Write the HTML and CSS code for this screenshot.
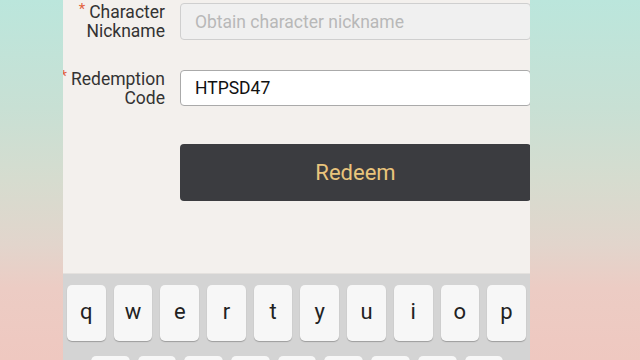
FILE: index.html
```html
<!DOCTYPE html>
<html lang="en">
<head>
    <meta charset="UTF-8">
    <meta name="viewport" content="width=device-width, initial-scale=1.0">
    <title>Redeem Code</title>
    <link rel="stylesheet" href="styles.css">
</head>
<body>
    <div class="side"></div>

    <div class="phone">
        <div class="form">
            <div class="row">
                <label class="label">
                    <span class="line"><span class="req">*</span>Character</span>
                    <span class="line">Nickname</span>
                </label>
                <input class="field field-disabled" type="text" placeholder="Obtain character nickname" disabled>
            </div>
            <div class="row row-code">
                <label class="label">
                    <span class="line"><span class="req">*</span>Redemption</span>
                    <span class="line">Code</span>
                </label>
                <input class="field" type="text" value="HTPSD47">
            </div>
            <div class="row row-btn">
                <span></span>
                <button class="btn-redeem">Redeem</button>
            </div>
        </div>

        <div class="keyboard">
            <div class="key-row">
                <div class="key">q</div>
                <div class="key">w</div>
                <div class="key">e</div>
                <div class="key">r</div>
                <div class="key">t</div>
                <div class="key">y</div>
                <div class="key">u</div>
                <div class="key">i</div>
                <div class="key">o</div>
                <div class="key">p</div>
            </div>
            <div class="key-row key-row-2">
                <div class="key">a</div>
                <div class="key">s</div>
                <div class="key">d</div>
                <div class="key">f</div>
                <div class="key">g</div>
                <div class="key">h</div>
                <div class="key">j</div>
                <div class="key">k</div>
                <div class="key">l</div>
            </div>
        </div>
    </div>

    <div class="side"></div>
</body>
</html>
```

FILE: styles.css
```css
* {
    margin: 0;
    padding: 0;
    box-sizing: border-box;
}

html, body {
    height: 100%;
    overflow: hidden;
}

body {
    font-family: Roboto, 'Noto Sans', sans-serif;
    background: linear-gradient(180deg, #bbe6dc 0%, #c8e0d4 30%, #d6dccf 50%, #e2d5cc 68%, #ecccc4 80%, #efc8c0 100%);
    display: flex;
    width: 640px;
    height: 360px;
}

.side {
    width: 63px;
    flex: none;
}

.side:last-child {
    width: 110px;
}

.phone {
    width: 467px;
    flex: none;
    background: #f3f0ed;
    display: flex;
    flex-direction: column;
    overflow: hidden;
}

.form {
    flex: none;
    padding-top: 3px;
    height: 274px;
    border-bottom: 1px solid #e4e1de;
}

.row {
    display: grid;
    grid-template-columns: 117px 1fr;
    align-items: start;
}

.row-code {
    margin-top: 30px;
}

.row-btn {
    margin-top: 37px;
}

.label {
    height: 37px;
    display: flex;
    flex-direction: column;
    align-items: flex-end;
    padding-right: 15px;
    font-size: 17.5px;
    line-height: 18.5px;
    color: #333;
}

.line {
    white-space: nowrap;
}

.req {
    display: inline-block;
    color: #e2623e;
    font-size: 15px;
    line-height: 10px;
    margin-right: 4px;
    vertical-align: 4px;
}

.field {
    width: 351px;
    height: 37px;
    border: 1px solid #aaa;
    border-radius: 4px;
    background: #fff;
    font-family: Roboto, 'Noto Sans', sans-serif;
    font-size: 17.5px;
    color: #111;
    padding: 0 14px;
    outline: none;
}

.row-code .field {
    height: 36px;
}

.field-disabled {
    background: #f0f0f0;
    border-color: #cfcfcf;
}

.field::placeholder {
    color: #b8b8b8;
    font-size: 17.5px;
}

.btn-redeem {
    width: 351px;
    height: 57px;
    border: none;
    border-radius: 4px;
    background: #3b3c40;
    color: #e9c47c;
    font-family: Roboto, 'Noto Sans', sans-serif;
    font-size: 22px;
}

.keyboard {
    flex: 1;
    background: #d4d4d4;
    padding: 11px 4px 0 4px;
}

.key-row {
    display: flex;
    gap: 8px;
    margin-bottom: 15px;
}

.key-row-2 {
    padding: 0 24px;
}

.key {
    width: 38.7px;
    height: 56px;
    flex: none;
    background: #f7f7f7;
    border-radius: 5px;
    box-shadow: 0 1px 1px #9d9d9d;
    display: flex;
    justify-content: center;
    align-items: center;
    font-size: 22px;
    color: #222;
    padding-bottom: 4px;
}
```
